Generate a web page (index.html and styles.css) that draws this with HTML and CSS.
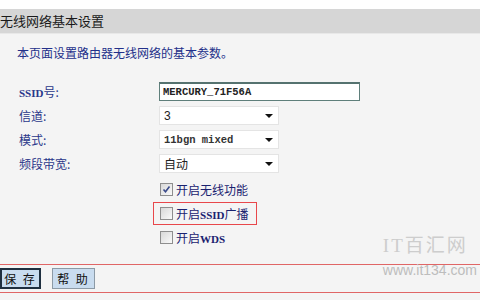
FILE: index.html
```html
<!DOCTYPE html>
<html>
<head>
<meta charset="utf-8">
<link rel="stylesheet" href="styles.css">
</head>
<body>
<div class="page">
  <div class="title">无线网络基本设置</div>
  <div class="content">
    <p class="intro">本页面设置路由器无线网络的基本参数。</p>
    <div class="form">
      <div class="row">
        <span class="label"><span class="lat">SSID</span>号:</span>
        <div class="input">MERCURY_71F56A</div>
      </div>
      <div class="row">
        <span class="label">信道:</span>
        <div class="select"><span class="val num">3</span><span class="arrow"></span></div>
      </div>
      <div class="row">
        <span class="label">模式:</span>
        <div class="select"><span class="val mono">11bgn mixed</span><span class="arrow"></span></div>
      </div>
      <div class="row">
        <span class="label">频段带宽:</span>
        <div class="select"><span class="val">自动</span><span class="arrow"></span></div>
      </div>
    </div>
    <div class="checks">
      <div class="check"><span class="box checked"><svg width="9" height="9" viewBox="0 0 9 9"><path d="M1.5 4.5 L3.5 6.8 L7.5 1.5" fill="none" stroke="#3a4a8a" stroke-width="1.6"/></svg></span><span>开启无线功能</span></div>
      <div class="check hl"><span class="box"></span><span>开启<span class="lat">SSID</span>广播</span></div>
      <div class="check"><span class="box"></span><span>开启<span class="lat">WDS</span></span></div>
    </div>
  </div>
  <div class="buttons">
    <span class="btn primary">保 存</span>
    <span class="btn">帮 助</span>
  </div>
  <div class="watermark"><div class="wm1">IT百汇网</div><div class="wm2">www.it134.com</div></div>
</div>
</body>
</html>
```

FILE: styles.css
```css
html, body {
  margin: 0;
  padding: 0;
  background: #f4f4f4;
  width: 480px;
  height: 300px;
  overflow: hidden;
}
.page {
  font-family: "Noto Sans CJK SC", "Liberation Sans", sans-serif;
  font-size: 12px;
  color: #1e2a7a;
  padding-top: 9px;
  background: linear-gradient(#ffffff 0 9px, #f4f4f4 9px);
  height: 300px;
  box-sizing: border-box;
  position: relative;
  overflow: hidden;
}
.title {
  height: 24px;
  line-height: 24px;
  background: #d6d6d6;
  border-bottom: 1px solid #e8e8e8;
  color: #1a1a1a;
  font-size: 13px;
}
.content {
  padding: 0 0 0 17px;
  height: 230px;
}
.intro {
  margin: 0;
  padding-top: 10px;
  height: 38px;
  line-height: 18px;
  font-size: 12px;
  color: #23308a;
}
.lat {
  font-family: "Liberation Serif", serif;
  font-weight: bold;
  font-size: 11px;
}
.form {
  display: flex;
  flex-direction: column;
  gap: 5px;
}
.row {
  display: flex;
  align-items: center;
  height: 19px;
}
.label {
  width: 140px;
  padding-left: 2px;
  color: #2a378a;
}
.input {
  width: 196px;
  height: 16px;
  line-height: 16px;
  border: 1px solid #5f7f7b;
  border-top: 2px solid #55726f;
  background: #fff;
  font-family: "Liberation Mono", monospace;
  font-size: 10.5px;
  font-weight: bold;
  color: #222;
  padding-left: 3px;
}
.select {
  width: 120px;
  height: 19px;
  box-sizing: border-box;
  border: 1px solid #e4e4e4;
  background: #fff;
  display: flex;
  align-items: center;
  justify-content: space-between;
  padding: 0 5px 0 4px;
  color: #222;
}
.val { font-size: 12px; }
.num { font-family: "Liberation Sans", sans-serif; }
.mono { font-family: "Liberation Mono", monospace; font-size: 10.5px; font-weight: bold; color: #333; }
.arrow {
  width: 0; height: 0;
  border-left: 4px solid transparent;
  border-right: 4px solid transparent;
  border-top: 4px solid #111;
}
.checks {
  display: flex;
  flex-direction: column;
  margin-left: 135px;
  margin-top: 7px;
  gap: 4px;
}
.check {
  display: flex;
  align-items: center;
  height: 19px;
  gap: 3px;
  color: #1a2270;
  font-size: 12px;
  padding-left: 8px;
  width: 92px;
}
.check.hl {
  outline: 1px solid #e8474b;
  height: 21px;
  margin-left: 2px;
  padding-left: 6px;
  width: 96px;
}
.box {
  width: 11px;
  height: 11px;
  border: 1px solid #8e8e8e;
  background: linear-gradient(135deg, #d8d8d8, #fafafa);
  display: inline-flex;
  align-items: center;
  justify-content: center;
}
.watermark {
  position: absolute;
  right: 3px;
  top: 234px;
  color: #c8c8c8;
  white-space: nowrap;
  pointer-events: none;
  text-align: right;
}
.wm1 { font-size: 19px; font-family: "Liberation Serif", "Noto Sans CJK SC", serif; letter-spacing: 2px; line-height: 24px; color: #cdcdcd; text-align: left; }
.wm2 { font-size: 14px; font-family: "Liberation Sans", sans-serif; color: #bdbdbd; line-height: 20px; margin-top: 2px; }
.buttons {
  position: absolute;
  left: 0; right: 0;
  top: 264px;
  height: 27px;
  border-top: 1px solid #e06666;
  border-bottom: 1px solid #e06666;
  display: flex;
  align-items: center;
  gap: 10px;
}
.btn {
  display: inline-flex;
  align-items: center;
  justify-content: center;
  width: 43px;
  height: 21px;
  background: #c9dcef;
  border: 1px solid #8c9aa6;
  color: #111;
  font-size: 12px;
  box-sizing: border-box;
  letter-spacing: 2px;
  margin-left: 1px;
}
.btn.primary {
  border: 2px solid #1f2f3f;
  width: 41px;
  margin-left: 0;
}
```
